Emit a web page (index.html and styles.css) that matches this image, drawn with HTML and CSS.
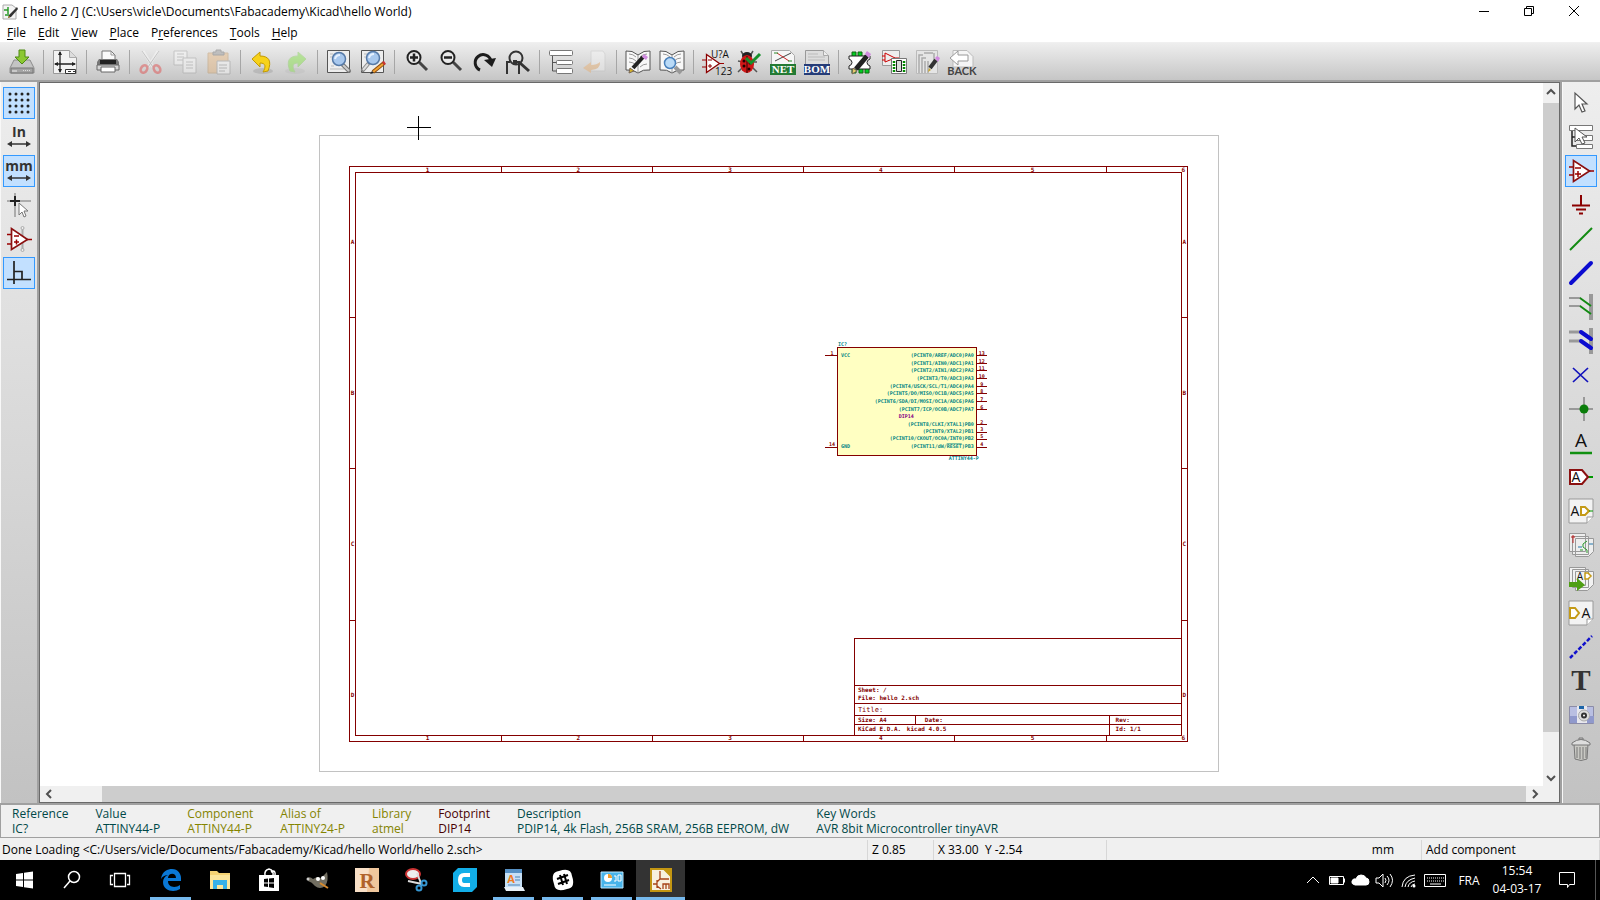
FILE: index.html
```html
<!DOCTYPE html>
<html lang="en">
<head>
    <meta charset="UTF-8">
    <meta name="viewport" content="width=device-width, initial-scale=1.0">
    <title>[ hello 2 /] (C:\Users\vicle\Documents\Fabacademy\Kicad\hello World)</title>
    <link rel="stylesheet" href="styles.css">
</head>
<body>
    <header class="titlebar">
        <svg class="app-icon" viewBox="0 0 16 16"><path d="M1 1h9l4 3v11H1z" fill="#f4f4f4" stroke="#aaa"/><path d="M2 6h4M6 3v7M3 11h4" stroke="#2a9a2a" stroke-width="1.5"/><path d="M15 3L7 11l-1 3 3-1 7-8z" fill="#333"/><path d="M6 14l1-2 1 1z" fill="#c90"/></svg>
        <span class="title">[ hello 2 /] (C:\Users\vicle\Documents\Fabacademy\Kicad\hello World)</span>
        <div class="window-buttons">
            <button aria-label="Minimize"><svg viewBox="0 0 12 12"><path d="M1 6.5h10" stroke="#000"/></svg></button>
            <button aria-label="Restore"><svg viewBox="0 0 12 12" fill="none" stroke="#000"><path d="M1.5 3.5h7v7h-7zM3.5 3.5v-2h7v7h-2"/></svg></button>
            <button aria-label="Close"><svg viewBox="0 0 12 12"><path d="M1 1l10 10M11 1L1 11" stroke="#000"/></svg></button>
        </div>
    </header>

    <nav class="menu">
        <button><u>F</u>ile</button>
        <button><u>E</u>dit</button>
        <button><u>V</u>iew</button>
        <button><u>P</u>lace</button>
        <button>P<u>r</u>eferences</button>
        <button><u>T</u>ools</button>
        <button><u>H</u>elp</button>
    </nav>

    <div class="toolbar">
        <button aria-label="Save"><svg viewBox="0 0 24 24"><path d="M4 10h16l4 8v5H0v-5z" fill="#c4c4c4" stroke="#8c8c8c"/><path d="M1 18h22v5H1z" fill="#a4a4a4" stroke="#777"/><path d="M13 20.5h8" stroke="#ddd" stroke-dasharray="1 1"/><path d="M2 21h5" stroke="#eee"/><path d="M9 0h6v7h4l-7 7-7-7h4z" fill="#8cc832" stroke="#4e8a12"/></svg></button>
        <hr>
        <button aria-label="Page settings"><svg viewBox="0 0 24 24"><path d="M.5.5h16l7 7v16H.5z" fill="#f3f3f3" stroke="#999"/><path d="M16.5.5v7h7" fill="#ddd" stroke="#aaa"/><path d="M7 2v20M2 14h20" stroke="#222" stroke-width="1.3"/><path d="M7 1L5 5h4zM7 23l-2-4h4zM1 14l4-2v4zM23 14l-4-2v4z" fill="#222"/><path d="M12.5 19.5h10v4h-10zM15 21.5h3M20 21.5h2" fill="#fff" stroke="#333"/></svg></button>
        <hr>
        <button aria-label="Print"><svg viewBox="0 0 24 24"><path d="M6 10V1h9l4 4v5" fill="#fafafa" stroke="#777"/><path d="M15 1v4h4" fill="none" stroke="#999"/><path d="M3 9h18l2 3v8H1v-8z" fill="#777"/><path d="M4 10h16v4H4z" fill="#222"/><path d="M1 15h22v5H1z" fill="#d6d6d6" stroke="#666"/><path d="M5 17h14v5H5z" fill="#fff" stroke="#666"/></svg></button>
        <hr>
        <button aria-label="Cut" disabled><svg viewBox="0 0 24 24" fill="none"><path d="M4 1l10 16M19 1L9 17" stroke="#fff" stroke-width="3"/><path d="M3 1l11 16M20 1L9 17" stroke="#999"/><g stroke="#e33030" stroke-width="2.500"><ellipse cx="5" cy="19" rx="3" ry="4" transform="rotate(35 5 19)"/><ellipse cx="18" cy="19" rx="3" ry="4" transform="rotate(-35 18 19)"/></g></svg></button>
        <button aria-label="Copy" disabled><svg viewBox="0 0 24 24"><path d="M1 1h13v14H1z" fill="#fff" stroke="#999"/><path d="M4 4h7M4 7h7M4 10h7" stroke="#999"/><path d="M10 8h13v15H10z" fill="#fff" stroke="#999"/><path d="M13 12h7M13 15h7M13 18h7" stroke="#999"/></svg></button>
        <button aria-label="Paste" disabled><svg viewBox="0 0 24 24"><path d="M1 3h20v20H1z" fill="#e8b070" stroke="#b98a50"/><path d="M6 5V2h3V0h5v2h3v3z" fill="#888" stroke="#555"/><path d="M10 11h13v13H10z" fill="#fff" stroke="#888"/><path d="M12 15h8M12 18h8M12 21h6" stroke="#888"/></svg></button>
        <hr>
        <button aria-label="Undo"><svg viewBox="0 0 24 24"><ellipse cx="13" cy="21" rx="10" ry="3" fill="#aaa" opacity=".6"/><path d="M2 9l8-7v4c9 0 12 5 8 15l-5 1c3-5 3-9-3-9v4z" fill="#f7d21b" stroke="#c39a06"/></svg></button>
        <button aria-label="Redo" disabled><svg viewBox="0 0 24 24"><ellipse cx="11" cy="21" rx="10" ry="3" fill="#aaa" opacity=".5"/><path d="M22 9l-8-7v4C5 6 2 11 6 21l5 1c-3-5-3-9 3-9v4z" fill="#75e32b" stroke="#7fce4f"/></svg></button>
        <hr>
        <button aria-label="Find"><svg viewBox="0 0 24 24"><path d="M.5.5h22v22H.5z" fill="#eee" stroke="#555"/><path d="M3 4h3M3 7h2M3 19h14M4 16h3" stroke="#bbb"/><path d="M16 15l6 6" stroke="#777" stroke-width="4" stroke-linecap="round"/><path d="M16 15l6 6" stroke="#ccc" stroke-width="2"/><circle cx="12" cy="9" r="6.5" fill="#a8c8ee" stroke="#567aa8" stroke-width="1.5"/><path d="M8 9q1-4 5-4" fill="none" stroke="#e6f1ff" stroke-width="2"/></svg></button>
        <button aria-label="Find and replace"><svg viewBox="0 0 24 24"><path d="M.5.5h22v22H.5z" fill="#eee" stroke="#555"/><path d="M3 4h3M3 7h2" stroke="#bbb"/><path d="M7 14l-5 6" stroke="#888" stroke-width="4" stroke-linecap="round"/><path d="M7 14l-5 6" stroke="#ddd" stroke-width="2"/><circle cx="12" cy="8" r="6.5" fill="#a8c8ee" stroke="#567aa8" stroke-width="1.5"/><path d="M8 8q1-4 5-4" fill="none" stroke="#e6f1ff" stroke-width="2"/><path d="M23 13L12 22" stroke="#8c4d10" stroke-width="4"/><path d="M22 14L12 22" stroke="#f1a233" stroke-width="2"/><path d="M21 12l2-1 2 3-2 1z" fill="#c33"/><path d="M9 24l2-3 2 2z" fill="#222"/></svg></button>
        <hr>
        <button aria-label="Zoom in"><svg viewBox="-2 0 24 24" fill="none" stroke="#222"><path d="M13 12l8 8" stroke="#444" stroke-width="3"/><circle cx="8" cy="7.5" r="6.500" fill="#e9e9e9" stroke-width="2"/><path d="M4 7.5h8M8 3.500v8" stroke-width="2.500"/></svg></button>
        <button aria-label="Zoom out"><svg viewBox="-2 0 24 24" fill="none" stroke="#222"><path d="M13 12l8 8" stroke="#444" stroke-width="3"/><circle cx="8" cy="7.5" r="6.500" fill="#e9e9e9" stroke-width="2"/><path d="M4 7.5h8" stroke-width="2.500"/></svg></button>
        <button aria-label="Redraw view"><svg viewBox="0 0 24 24"><path d="M8 20A8 8 0 1 1 19 11" fill="none" stroke="#1c1c1c" stroke-width="3"/><path d="M12 10l12-2-4 9z" fill="#1c1c1c"/></svg></button>
        <button aria-label="Zoom to fit"><svg viewBox="1 0 24 24" fill="none" stroke="#333" stroke-width="2"><path d="M5 12H2v12M11 12h3v12"/><path d="M15 13l9 8" stroke-width="3"/><circle cx="11" cy="8" r="6.5"/><path d="M8 10h4v4H8z" fill="#333" stroke="none"/></svg></button>
        <hr>
        <button aria-label="Navigate hierarchy"><svg viewBox="0 0 24 24"><path d="M3.5 5v16h4M3.5 12.5h4" fill="none" stroke="#555"/><g fill="#fff" stroke="#777"><rect x=".5" y=".5" width="23" height="5" rx="1"/><rect x="7.5" y="10.5" width="16" height="4" rx="1"/><rect x="7.5" y="18.5" width="16" height="5" rx="1"/></g></svg></button>
        <button class="faint" aria-label="Leave sheet" disabled><svg viewBox="0 0 24 24"><path d="M8 1h12l2 3v17H8z" fill="#fff" stroke="#bbb"/><path d="M17 12q1 7-9 8v3l-8-5 8-6v3q6 0 9-3z" fill="#f29a3b"/></svg></button>
        <hr>
        <button aria-label="Library editor"><svg viewBox="0 0 24 24"><path d="M0 1q6-1 12 4 6-5 12-4v19q-7-1-12 3-5-4-12-3z" fill="#f8f8f8" stroke="#555"/><path d="M12 5v18M3 4q4 0 7 3M3 8q4 0 7 3M3 12q4 0 7 3M21 4q-4 0-7 3M21 14q-4 0-7 3" fill="none" stroke="#999"/><path d="M17 7L7 18" stroke="#222" stroke-width="4"/><path d="M16 7l2-3 4 3-2 3z" fill="#d18be0"/><path d="M3 23l1-5 4 3z" fill="#d6b428" stroke="#765"/></svg></button>
        <button aria-label="Library browser"><svg viewBox="0 0 24 24"><path d="M0 1q6-1 12 4 6-5 12-4v19q-7-1-12 3-5-4-12-3z" fill="#f8f8f8" stroke="#555"/><path d="M12 5v18M3 4q4 0 7 3M21 4q-4 0-7 3M21 8q-4 0-7 3M21 12q-4 0-7 3" fill="none" stroke="#999"/><path d="M15 17l6 6" stroke="#999" stroke-width="4"/><circle cx="10" cy="13" r="5.5" fill="#b9daf7" stroke="#4980bb" stroke-width="1.5"/></svg></button>
        <hr>
        <button aria-label="Annotate"><svg viewBox="0 0 24 24"><path d="M-1 10h4M-1 17h4M16 13.5h5" stroke="#900"/><path d="M3.5 4.5v18l13-9z" fill="#fff" stroke="#8b0000" stroke-width="1.3"/><path d="M5 10h4M5 16h4M7 14v4" stroke="#8b0000"/><text x="8" y="8" class="icon-text">U?A</text><text x="12" y="25" class="icon-text">123</text></svg></button>
        <button aria-label="Electrical rules check"><svg viewBox="0 0 24 24"><path d="M4 1l3 5M16 1l-3 5M1 11l5 1M1 22l5-5M20 22l-5-5M15 12h5" stroke="#555" stroke-width="1.5"/><ellipse cx="10" cy="6" rx="5" ry="4" fill="#222"/><ellipse cx="10" cy="14" rx="7" ry="9" fill="#cf1616"/><path d="M10 6v17" stroke="#300"/><g fill="#200"><circle cx="7" cy="11" r="1.5"/><circle cx="13" cy="13" r="1.5"/><circle cx="7" cy="16" r="1.5"/><circle cx="12" cy="19" r="1.5"/></g><path d="M9 8l5 5 9-9" fill="none" stroke="#17912b" stroke-width="3"/></svg></button>
        <button aria-label="Generate netlist"><svg viewBox="0 0 24 24"><path d="M.5.5h18l5 5v9H.5z" fill="#f6f6f6" stroke="#aaa"/><path d="M4 11l16-8" stroke="#444"/><path d="M6 3l12 8" stroke="#c22"/><path d="M3 3h4M17 11h4" stroke="#2a8a2a"/><path d="M-1 14h26v11H-1z" fill="#237a33"/><text x="12" y="23" class="badge-text">NET</text></svg></button>
        <button aria-label="Bill of materials"><svg viewBox="0 0 24 24"><path d="M.5.5h18l5 5v9H.5z" fill="#ddd" stroke="#999"/><path d="M18.5.5v5h5" fill="#eee" stroke="#aaa"/><path d="M3 4h10M3 7h17M3 10h17" stroke="#bbb"/><path d="M-1 14h26v11H-1z" fill="#253c78"/><text x="12" y="23" class="badge-text">BOM</text></svg></button>
        <hr>
        <button aria-label="Footprint editor"><svg viewBox="0 0 24 24"><g fill="#0c2" stroke="#161"><path d="M4 2h4v5H4zM10 2h4v5h-4zM4 18h4v5H4zM11 18h4v5h-4zM17 18h4v5h-4z"/></g><path d="M1 6h21v3q-3 1-3 3.500t3 3.500v3H1v-3q3-1 3-3.500T1 9z" fill="#fff" stroke="#222"/><path d="M19 6L8 19" stroke="#222" stroke-width="5"/><path d="M17 4l2-3 4 3-2 4z" fill="#d18be0"/><path d="M4 24l1-6 4 3z" fill="#e5d06a" stroke="#765"/></svg></button>
        <button aria-label="Assign footprints"><svg viewBox="0 0 24 24"><path d="M.5.5h17v15H.5z" fill="#eee" stroke="#999"/><path d="M3 3v9l10-4zM0 6h3M0 10h3M13 8h4" fill="none" stroke="#c00"/><path d="M9.5 8.5h15v15h-15z" fill="#fff" stroke="#777"/><path d="M14.5 10.5h5v11h-5z" fill="#ddd" stroke="#222"/><path d="M12 11v11M22 11v11" stroke="#080" stroke-width="2.5" stroke-dasharray="2 1"/></svg></button>
        <button aria-label="Layout board"><svg viewBox="0 0 24 24"><path d="M.5.5h21v23H.5z" fill="#e5e5e5" stroke="#bbb"/><path d="M3 23V5h4M6 23V8h4M9 23V11M12 23V11M8 3h9M18 3v9" fill="none" stroke="#aaa" stroke-width="1.5"/><path d="M20 10l-6 8" stroke="#333" stroke-width="4"/><path d="M19 8l2-2 3 2-2 4z" fill="#d18be0"/><path d="M12 22l1-4 2 2z" fill="#c9a52a"/></svg></button>
        <button aria-label="Back annotate"><svg viewBox="0 0 24 24"><path d="M3 .5h14l6 6V17H3z" fill="#f5f5f5" stroke="#bbb"/><path d="M0 8l8-7v4h10v6H8v4z" fill="#fff" stroke="#999"/><text x="12" y="25" class="back-text">BACK</text></svg></button>
    </div>

    <main class="workspace">
        <div class="sidebar">
            <button class="active" aria-label="Grid"><svg viewBox="1 0 24 24"><path d="M4 3h19M4 9h19M4 15h19M4 21h19" stroke="#222" stroke-width="3" stroke-linecap="round" stroke-dasharray="0 6"/></svg></button>
            <button aria-label="Inches"><svg viewBox="0 0 24 24"><text x="12" y="12" class="unit-text">In</text><path d="M3 19h18M0 19l5-3v6zM24 19l-5-3v6z" fill="#333"/><path d="M3 19h18" stroke="#333" stroke-width="1.500"/></svg></button>
            <button class="active" aria-label="Millimetres"><svg viewBox="0 0 24 24"><text x="12" y="12" class="unit-text">mm</text><path d="M0 19l5-3v6zM24 19l-5-3v6z" fill="#333"/><path d="M3 19h18" stroke="#333" stroke-width="1.500"/></svg></button>
            <button aria-label="Cursor shape"><svg viewBox="0 0 24 24"><path d="M0 8h24M8 0v24" stroke="#999" stroke-width="1.5"/><path d="M3 8h10M8 3v10" stroke="#222" stroke-width="2"/><path d="M12 10v12l3-3 2 5 2-1-2-5h4z" fill="#fff" stroke="#777"/></svg></button>
            <button aria-label="Show hidden pins"><svg viewBox="0 0 24 24"><path d="M15.5 2v20" stroke="#aaa" stroke-width="2"/><circle cx="15.5" cy="1" r="1.5" fill="#eee" stroke="#aaa"/><circle cx="15.5" cy="23" r="1.5" fill="#eee" stroke="#aaa"/><path d="M0 7.5h4M0 17h4M20 12.5h5" stroke="#900" stroke-width="1.5"/><path d="M4.5 1.5v21l16-10z" fill="#fff" stroke="#8b1010" stroke-width="1.7"/><path d="M7 9h5M7 15h5M9.5 12.5v5" stroke="#900" stroke-width="1.5"/></svg></button>
            <button class="active" aria-label="Orthogonal wires"><svg viewBox="0 0 24 24"><path d="M7 0v23M0 18.5h24M7 10.5h8v8" fill="none" stroke="#222" stroke-width="1.7"/></svg></button>
        </div>

        <div class="canvas">
            <svg class="sheet" viewBox="39 82 1503 704">
                <rect x="318" y="135" width="900" height="636" class="page"/>
                <g class="frame">
                    <rect x="348" y="166" width="839" height="575"/>
                    <rect x="354" y="172" width="827" height="563"/>
                    <path d="M500 166v6M651 166v6M803 166v6M954 166v6M1106 166v6M500 735v6M651 735v6M803 735v6M954 735v6M1106 735v6"/>
                    <path d="M348 317h6M348 468h6M348 620h6M1181 317h6M1181 468h6M1181 620h6"/>
                    <path d="M1181 638H854v97M854 685h327M854 703h327M854 715h327M854 724h327M915 715v9M1109 715v20"/>
                </g>
                <g class="ruler">
                    <text x="426" y="171">1</text><text x="577" y="171">2</text><text x="729" y="171">3</text><text x="880" y="171">4</text><text x="1032" y="171">5</text><text x="1183" y="171">6</text>
                    <text x="426" y="740">1</text><text x="577" y="740">2</text><text x="729" y="740">3</text><text x="880" y="740">4</text><text x="1032" y="740">5</text><text x="1183" y="740">6</text>
                    <text x="351" y="243">A</text><text x="351" y="394">B</text><text x="351" y="546">C</text><text x="351" y="697">D</text>
                    <text x="1184" y="243">A</text><text x="1184" y="394">B</text><text x="1184" y="546">C</text><text x="1184" y="697">D</text>
                </g>
                <g class="title-block">
                    <text x="857" y="692">Sheet: /</text>
                    <text x="857" y="700">File: hello 2.sch</text>
                    <text x="857" y="712" class="sheet-title">Title:</text>
                    <text x="857" y="722">Size: A4</text>
                    <text x="924" y="722">Date:</text>
                    <text x="1115" y="722">Rev:</text>
                    <text x="857" y="731">KiCad E.D.A.</text>
                    <text x="906" y="731">kicad 4.0.5</text>
                    <text x="1115" y="731">Id: 1/1</text>
                </g>

                <!-- ATTINY44-P -->
                <rect x="837" y="347" width="139" height="108" class="chip"/>
                <path class="pins" d="M824 355h12M824 447h12M976 355h10M976 363h10M976 370h10M976 378h10M976 386h10M976 393h10M976 401h10M976 409h10M976 424h10M976 432h10M976 439h10M976 447h10"/>
                <g class="pin-names">
                    <text x="837" y="345">IC?</text>
                    <text x="840" y="356">VCC</text>
                    <text x="840" y="448">GND</text>
                </g>
                <g class="pin-names right">
                    <text x="973" y="356">(PCINT0/AREF/ADC0)PA0</text>
                    <text x="973" y="364">(PCINT1/AIN0/ADC1)PA1</text>
                    <text x="973" y="371">(PCINT2/AIN1/ADC2)PA2</text>
                    <text x="973" y="379">(PCINT3/T0/ADC3)PA3</text>
                    <text x="973" y="387">(PCINT4/USCK/SCL/T1/ADC4)PA4</text>
                    <text x="973" y="394">(PCINT5/DO/MISO/OC1B/ADC5)PA5</text>
                    <text x="973" y="402">(PCINT6/SDA/DI/MOSI/OC1A/ADC6)PA6</text>
                    <text x="973" y="410">(PCINT7/ICP/OC0B/ADC7)PA7</text>
                    <text x="973" y="425">(PCINT8/CLKI/XTAL1)PB0</text>
                    <text x="973" y="433">(PCINT9/XTAL2)PB1</text>
                    <text x="973" y="440">(PCINT10/CKOUT/OC0A/INT0)PB2</text>
                    <text x="973" y="448">(PCINT11/dW/<tspan class="inverted">RESET</tspan>)PB3</text>
                    <text x="978" y="460">ATTINY44-P</text>
                </g>
                <text x="898" y="417" class="footprint">DIP14</text>
                <g class="pin-numbers">
                    <text x="831" y="354">1</text><text x="831" y="446">14</text>
                    <text x="981" y="354">13</text><text x="981" y="362">12</text><text x="981" y="369">11</text><text x="981" y="377">10</text>
                    <text x="981" y="385">9</text><text x="981" y="392">8</text><text x="981" y="400">7</text><text x="981" y="408">6</text>
                    <text x="981" y="423">2</text><text x="981" y="431">3</text><text x="981" y="438">5</text><text x="981" y="446">4</text>
                </g>
                <path class="cursor" d="M405 127h24M417 115v24"/>
            </svg>
            <div class="vscroll">
                <button aria-label="Scroll up"><svg viewBox="0 0 10 10"><path d="M1 7l4-4 4 4"/></svg></button>
                <div class="track"><div class="thumb"></div></div>
                <button aria-label="Scroll down"><svg viewBox="0 0 10 10"><path d="M1 3l4 4 4-4"/></svg></button>
            </div>
            <div class="hscroll">
                <button aria-label="Scroll left"><svg viewBox="0 0 10 10"><path d="M7 1L3 5l4 4"/></svg></button>
                <div class="track"><div class="thumb"></div></div>
                <button aria-label="Scroll right"><svg viewBox="0 0 10 10"><path d="M3 1l4 4-4 4"/></svg></button>
            </div>
            <div class="corner"></div>
        </div>

        <div class="sidebar tools">
            <button aria-label="Select"><svg viewBox="0 0 24 24"><path d="M6 2v16l4-4 3 7 3-1-3-7h5z" fill="#fff" stroke="#555" stroke-width="1.2"/></svg></button>
            <button aria-label="Ascend or descend hierarchy"><svg viewBox="0 0 24 24"><path d="M3 5v16h4M3 12h4" fill="none" stroke="#222" stroke-width="1.5"/><g fill="#fff" stroke="#777"><path d="M.5.5h23v5H.5zM7.5 10.5h16v5h-16zM7.5 19.5h16v4h-16z"/></g><path d="M6 3v14l4-4 3 6 3-1-3-6h5z" fill="#fff" stroke="#555"/></svg></button>
            <button class="active" aria-label="Place component"><svg viewBox="0 0 24 24"><path d="M0 8h4M0 16h4M20 12h5" stroke="#900" stroke-width="1.5"/><path d="M4.5 1.5v21l16-10.5z" fill="#fff" stroke="#8b1010" stroke-width="1.7"/><path d="M6 9h6M6 15h6M9 12v6" stroke="#900" stroke-width="1.5"/></svg></button>
            <button aria-label="Place power port"><svg viewBox="0 0 24 24"><path d="M12 2v10M3 12.5h18M7 16.5h10M10 20.5h4" stroke="#8b0000" stroke-width="2"/></svg></button>
            <button aria-label="Place wire"><svg viewBox="0 0 24 24"><path d="M1 23L23 1" stroke="#118a11" stroke-width="2"/></svg></button>
            <button aria-label="Place bus"><svg viewBox="0 0 24 24"><path d="M2 22L22 2" stroke="#0b0bd0" stroke-width="4" stroke-linecap="round"/></svg></button>
            <button aria-label="Wire to bus entry"><svg viewBox="0 0 24 24"><path d="M0 3h12M0 11h12" stroke="#999" stroke-width="2"/><path d="M22-1v26" stroke="#999" stroke-width="4"/><path d="M11 3l11 8M11 11l11 8" stroke="#118a11" stroke-width="2"/></svg></button>
            <button aria-label="Bus to bus entry"><svg viewBox="0 0 24 24"><path d="M0 3h12M0 12h12" stroke="#999" stroke-width="3"/><path d="M22-1v26" stroke="#999" stroke-width="4"/><path d="M12 3l10 7M12 12l10 7" stroke="#0b0bd0" stroke-width="4" stroke-linecap="round"/></svg></button>
            <button aria-label="No connect"><svg viewBox="0 0 24 24"><path d="M4 5l15 14M19 5L4 19" stroke="#1111bb" stroke-width="1.7"/></svg></button>
            <button aria-label="Junction"><svg viewBox="0 0 24 24"><path d="M0 12h24M15 0v24" stroke="#999" stroke-width="2"/><circle cx="15" cy="12" r="4.5" fill="#0a7d0a"/></svg></button>
            <button aria-label="Net name"><svg viewBox="0 0 24 24"><text x="12" y="16" class="label-large">A</text><path d="M1 22h22" stroke="#109010" stroke-width="2.5"/></svg></button>
            <button aria-label="Global label"><svg viewBox="0 0 24 24"><path d="M19 12h5" stroke="#090" stroke-width="2"/><path d="M1 5h12l6 7-6 7H1z" fill="#fff" stroke="#8b1010" stroke-width="2"/><text x="7" y="17" class="label-medium">A</text></svg></button>
            <button aria-label="Hierarchical label"><svg viewBox="0 0 24 24"><path d="M0 0h24v18l-6 6H0z" fill="#f3f3f3" stroke="#999"/><path d="M24 18h-6v6" fill="#fff" stroke="#999"/><text x="6" y="17" class="label-medium">A</text><path d="M12 8h4l4 4-4 4h-4z" fill="#fff" stroke="#c49a17" stroke-width="2"/><path d="M20 12h4" stroke="#090"/></svg></button>
            <button aria-label="Hierarchical sheet"><svg viewBox="0 0 24 24"><g fill="#eee" stroke="#999"><path d="M.5.5h16v18H.5zM3.5 3.5h16v18h-16zM6.5 5.5h18v13l-5 5h-13z"/></g><path d="M2 4h4M4 2v8" stroke="#b22"/><path d="M9 14h4M20 11h4" stroke="#27a"/><path d="M18 8l-4 3v3l4 3v3M14 17h-3" fill="none" stroke="#2a9a2a"/></svg></button>
            <button aria-label="Import hierarchical label"><svg viewBox="0 0 24 24"><path d="M.5.5h16v18H.5zM3.5 2.5h16v18h-16zM6.5 4.5h18v13l-6 6h-12z" fill="#f2f2f2" stroke="#999"/><text x="11" y="13" class="label-small">A</text><path d="M16 6h3l3 3-3 3h-3z" fill="#fff" stroke="#c49a17" stroke-width="1.5"/><path d="M0 15h8v-4l8 7-8 6v-4H0z" fill="#4f9f13"/></svg></button>
            <button aria-label="Place sheet pin"><svg viewBox="0 0 24 24"><path d="M0 0h24v18l-6 6H0z" fill="#f3f3f3" stroke="#999"/><path d="M24 18h-6v6" fill="#fff" stroke="#999"/><path d="M1 7h5l4 5-4 5H1z" fill="#fff" stroke="#c49a17" stroke-width="2"/><text x="17" y="17" class="label-medium">A</text></svg></button>
            <button aria-label="Graphic line"><svg viewBox="0 0 24 24"><path d="M1 23L23 1" stroke="#1111cc" stroke-width="2.5" stroke-dasharray="4 2"/></svg></button>
            <button aria-label="Place text"><svg viewBox="0 0 24 24"><text x="12" y="21" class="text-tool">T</text></svg></button>
            <button aria-label="Place image"><svg viewBox="0 0 24 24"><path d="M.5 3.5h24v17H.5z" fill="#b9bfe2" stroke="#8c8ca8"/><path d="M1 13h24v7H1z" fill="#9099cc"/><path d="M8 3h10v17H8z" fill="#e8e8ee"/><path d="M10 3h5v3h-5z" fill="#1d65a8"/><circle cx="15" cy="12.5" r="5.5" fill="#ddd" stroke="#aaa"/><circle cx="15" cy="12.5" r="3" fill="#333"/><circle cx="15" cy="12.5" r="1" fill="#fff"/></svg></button>
            <button aria-label="Delete"><svg viewBox="0 0 24 24"><path d="M5 7h14l-1 15q-6 3-12 0z" fill="#c9c9c4" stroke="#777"/><path d="M8 10v11M11 10v12M14 10v12M17 10v11" stroke="#777"/><path d="M3 6q9-7 18 0v2H3z" fill="#ddd" stroke="#777"/><path d="M10 3V1h4v2" fill="none" stroke="#777"/></svg></button>
        </div>
    </main>

    <section class="info">
        <div class="teal">Reference<br>IC?</div>
        <div class="teal">Value<br>ATTINY44-P</div>
        <div class="olive">Component<br>ATTINY44-P</div>
        <div class="olive">Alias of<br>ATTINY24-P</div>
        <div class="olive">Library<br>atmel</div>
        <div class="maroon">Footprint<br>DIP14</div>
        <div class="teal">Description<br>PDIP14, 4k Flash, 256B SRAM, 256B EEPROM, dW</div>
        <div class="teal">Key Words<br>AVR 8bit Microcontroller tinyAVR</div>
    </section>

    <footer class="status">
        <span>Done Loading &lt;C:/Users/vicle/Documents/Fabacademy/Kicad/hello World/hello 2.sch&gt;</span>
        <span>Z 0.85</span>
        <span>X 33.00&nbsp; Y -2.54</span>
        <span class="units">mm</span>
        <span>Add component</span>
    </footer>

    <div class="taskbar">
        <button aria-label="Start"><svg viewBox="0 0 24 24"><path d="M4 6l7-1v6.500H4zM12 4.800l9-1.300v8h-9zM4 12.500h7V19l-7-1zM12 12.500h9v8l-9-1.300z" fill="#fff"/></svg></button>
        <button aria-label="Search"><svg viewBox="0 0 24 24" fill="none" stroke="#fff" stroke-width="1.5"><circle cx="14" cy="9" r="5.5"/><path d="M10 13l-6 7"/></svg></button>
        <button aria-label="Task view"><svg viewBox="0 0 24 24" fill="none" stroke="#fff" stroke-width="1.3"><path d="M6.5 5.5h11v13h-11zM5 7.5H2.5v9H5M19 7.5h2.5v9H19"/></svg></button>
        <button class="pinned open" aria-label="Edge"><svg viewBox="0 0 24 24"><path d="M2 11C3 3 9 1 13 1c6 0 9 5 9 9v3H9c0 7 8 7 12 4v4c-6 4-17 2-17-7 0-3 2-6 5-7-3 0-5 1-7 4zM9 10h8c0-6-8-5-8 0z" fill="#0a78d6"/></svg></button>
        <button class="pinned" aria-label="File Explorer"><svg viewBox="0 0 24 24"><path d="M2 3h7l2 2h11v16H2z" fill="#f6d372"/><path d="M2 7h20v14H2z" fill="#fde69a"/><path d="M5 12h14v9h-4v-4H9v4H5z" fill="#37b1e8"/></svg></button>
        <button class="pinned" aria-label="Store"><svg viewBox="0 0 24 24"><path d="M8 8q-1-6 4-7 5 1 4 7M14 4q5-3 4 4" fill="none" stroke="#fff" stroke-width="1.5"/><path d="M2 7h20v16H2z" fill="#fff"/><path d="M7 11l4-.5v4H7zM12 10.500l5-.5v4.500h-5zM7 15.500h4V19l-4-.5zM12 15.500h5V20l-5-.8z" fill="#000"/></svg></button>
        <button class="pinned" aria-label="GIMP"><svg viewBox="0 0 24 24"><path d="M1 10q3-2 6 1l4-2 4 1 6-6q2 9-2 14-5 4-10 0-3-4-7-5z" fill="#716d60"/><circle cx="12" cy="11" r="2" fill="#fff"/><circle cx="17" cy="10" r="2" fill="#fff"/><circle cx="2" cy="11" r="1.5" fill="#ccc"/><path d="M14 15l8 5" stroke="#d78a2d" stroke-width="2"/></svg></button>
        <button class="pinned" aria-label="Revit"><svg viewBox="0 0 24 24"><path d="M0 0h24v24H0z" fill="#f8dfc6"/><path d="M14 0h10v24H12z" fill="#efc79d"/><text x="12" y="20" class="revit-text">R</text></svg></button>
        <button class="pinned" aria-label="Snipping Tool"><svg viewBox="0 0 24 24"><ellipse cx="9" cy="6" rx="7" ry="5" fill="#eee" stroke="#c33" stroke-width="2"/><path d="M4 13l14 3M13 5l5 13" stroke="#ddd" stroke-width="2"/><g fill="none" stroke="#3596d2" stroke-width="2"><circle cx="20" cy="15" r="2.5"/><circle cx="15" cy="20" r="2.5"/></g></svg></button>
        <button class="pinned" aria-label="Cura"><svg viewBox="0 0 24 24"><path d="M5 0h19v19l-5 5H0V5z" fill="#12aee8"/><path d="M17 7H11q-4 0-4 5t4 5h6" fill="none" stroke="#fff" stroke-width="4"/></svg></button>
        <button class="pinned open" aria-label="Notes"><svg viewBox="0 0 24 24"><path d="M3 2h17v18H3z" fill="#c7e0f6"/><path d="M3 1h17v4H3z" fill="#5690c4"/><path d="M13 9h5M13 12h5M6 17h12" stroke="#4b83b5"/><path d="M2 19h19l2 4H4z" fill="#e9f1f8"/><text x="9" y="15" class="note-text">A</text></svg></button>
        <button class="pinned open" aria-label="Slack"><svg viewBox="0 0 24 24"><path d="M8 3q12-4 13 5 4 12-5 13Q4 25 3 16-1 4 8 3z" fill="#fff"/><path d="M9 7l3 10M13 6l3 10M6 11l11-4M7 16l11-4" stroke="#000" stroke-width="2"/></svg></button>
        <button class="pinned open" aria-label="Control Panel"><svg viewBox="0 0 24 24"><path d="M1 4h22v16H1z" fill="#48b4ea" stroke="#bce7ff"/><circle cx="8" cy="10" r="4" fill="#fff"/><path d="M8 10V6a4 4 0 0 1 4 4z" fill="#f39b23"/><path d="M14 8h2v5h-2M18 7h3v6h-3zM4 17h12" fill="none" stroke="#fff"/></svg></button>
        <button class="pinned open current" aria-label="KiCad schematic"><svg viewBox="0 0 24 24"><path d="M2 1h13l7 7v15H2z" fill="#f8f1df" stroke="#c39612" stroke-width="2"/><path d="M14 0h9v10z" fill="#c39612"/><path d="M4 16h4M8 12v8M8 14l3-3V5M11 3v4M11 11h9M8 18l4 3M14 21v-5h6v5M17 16v5" fill="none" stroke="#a64318" stroke-width="1.3"/></svg></button>
        <div class="tray">
            <button aria-label="Show hidden icons"><svg viewBox="0 0 24 24"><path d="M6 15l6-6 6 6"/></svg></button>
            <button aria-label="Battery"><svg viewBox="0 0 24 24"><path d="M4.5 8.5h14v8h-14zM19.5 10.5v4"/><path d="M6 10h7v5H6z" fill="#fff" stroke="none"/></svg></button>
            <button aria-label="OneDrive"><svg viewBox="0 0 24 24"><path d="M6 17q-4-1-3-4 1-3 4-2 1-4 5-4t5 3q3 0 3 4 0 3-3 3z" fill="#fff" stroke="none"/><path d="M7 15q1-4 6-3" stroke="#000"/></svg></button>
            <button aria-label="Volume"><svg viewBox="1 0 24 24"><path d="M4 10h3l4-4v13l-4-4H4zM13 10q2 2 0 5M15 8q4 4 0 9M18 6q5 6 0 13"/></svg></button>
            <button aria-label="Network"><svg viewBox="0 0 24 24"><path d="M5 19Q6 8 18 7M8 19q1-7 10-9M11 19q1-5 7-6M14 19q1-3 4-3"/><circle cx="17" cy="18" r="1.5" fill="#fff"/></svg></button>
            <button class="keyboard" aria-label="Touch keyboard"><svg viewBox="0 0 24 24"><path d="M1.5 6.5h21v12h-21z"/><path d="M4 10h17M4 13h17" stroke-dasharray="1 1"/><path d="M7 16h11"/></svg></button>
            <button class="language">FRA</button>
            <button class="clock">15:54<br>04-03-17</button>
            <button class="notifications" aria-label="Notifications"><svg viewBox="0 0 24 24"><path d="M4.5 4.5h15v12h-5l-2 3v-3h-8z"/></svg></button>
        </div>
    </div>
</body>
</html>
```
FILE: styles.css
```css
* {
    box-sizing: border-box;
}
body {
    margin: 0;
    height: 100vh;
    display: flex;
    flex-direction: column;
    overflow: hidden;
    background-color: white;
    color: black;
    font-family: "Open Sans", "Noto Sans", sans-serif;
    font-size: 12px;
}
button {
    display: flex;
    align-items: center;
    justify-content: center;
    margin: 0;
    padding: 0;
    border: none;
    background: none;
    color: inherit;
    font: inherit;
}
svg {
    display: block;
    overflow: visible;
}

/* title and menu */
.titlebar {
    display: flex;
    align-items: center;
    height: 23px;
    padding-left: 2px;
    gap: 5px;
}
.app-icon {
    width: 16px;
    height: 16px;
}
.window-buttons {
    display: flex;
    align-self: flex-start;
    margin-left: auto;
    margin-right: 4px;
}
.window-buttons button {
    width: 45px;
    height: 21px;
}
.window-buttons svg {
    width: 12px;
    height: 12px;
}
.menu {
    display: flex;
    height: 19px;
    padding-left: 7px;
    gap: 12px;
}
.menu u {
    text-underline-offset: 2px;
}

/* top toolbar */
.toolbar {
    display: flex;
    align-items: center;
    height: 40px;
    padding-left: 5px;
    border-top: 1px solid #f0f0f0;
    border-bottom: 2px solid #a0a0a0;
    background: linear-gradient(#eeeeee, #c6c6c6);
}
.toolbar button {
    width: 34px;
    height: 34px;
}
.toolbar svg {
    width: 24px;
    height: 24px;
}
.toolbar button:disabled svg {
    opacity: 0.4;
}
.toolbar .faint:disabled svg {
    opacity: 0.3;
}
.toolbar hr {
    width: 1px;
    height: 24px;
    margin: 0 4px;
    border: none;
    background-color: #a6a6a6;
}
.icon-text {
    font: 10px "Open Sans", sans-serif;
    fill: #111;
}
.badge-text {
    font: bold 11px "Liberation Serif", serif;
    fill: white;
    text-anchor: middle;
}
.back-text {
    font: bold 11px Lato, sans-serif;
    fill: #444;
    text-anchor: middle;
}

/* side toolbars */
.workspace {
    flex: 1;
    display: flex;
    min-height: 0;
    gap: 2px;
    border-bottom: 2px solid #a0a0a0;
    background-color: #a0a0a0;
}
.sidebar {
    display: flex;
    flex-direction: column;
    gap: 2px;
    width: 37px;
    padding: 5px 2px;
    border-left: 1px solid #f8f8f8;
    background: linear-gradient(#eeeeee, #c2c2c2);
}
.sidebar.tools {
    width: 38px;
}
.sidebar button {
    width: 32px;
    height: 32px;
    border: 1px solid transparent;
}
.sidebar .active {
    border-color: #3399ff;
    background-color: #c2e0ff;
}
.sidebar svg {
    width: 24px;
    height: 24px;
}
.unit-text {
    font: bold 14px "Open Sans", sans-serif;
    fill: #333;
    text-anchor: middle;
}
.label-large, .label-medium, .label-small {
    font: 19px "Open Sans", sans-serif;
    fill: #111;
    text-anchor: middle;
}
.label-medium {
    font-size: 14px;
}
.label-small {
    font-size: 10px;
}
.text-tool {
    font: bold 29px "Liberation Serif", serif;
    fill: #333;
    text-anchor: middle;
}

/* drawing area */
.canvas {
    flex: 1;
    min-width: 0;
    display: grid;
    grid-template-columns: 1fr 16px;
    grid-template-rows: minmax(0, 1fr) 16px;
    border: 1px solid #696969;
    background-color: white;
}
.sheet {
    width: 100%;
    height: 100%;
    overflow: hidden;
    font-family: "DejaVu Sans Mono", monospace;
    font-size: 5px;
}
.sheet rect, .sheet path {
    fill: none;
    stroke: #840000;
    shape-rendering: crispEdges;
}
.sheet .page {
    stroke: #c2c2c2;
}
.sheet .chip {
    fill: #ffffc2;
}
.sheet .cursor {
    stroke: black;
}
.ruler, .title-block, .pin-numbers {
    fill: #840000;
}
.ruler, .pin-numbers {
    text-anchor: middle;
}
.ruler {
    font-size: 6px;
    font-weight: bold;
}
.title-block {
    font-size: 6px;
    font-weight: bold;
}
.sheet-title {
    font-size: 7px;
    font-weight: normal;
}
.pin-names {
    fill: #008484;
    font-weight: bold;
}
.right {
    text-anchor: end;
}
.inverted {
    text-decoration: overline;
}
.pin-numbers {
    font-weight: bold;
}
.footprint {
    fill: #840084;
    font-weight: bold;
}
.vscroll, .hscroll {
    display: flex;
    background-color: #f0f0f0;
}
.vscroll {
    flex-direction: column;
}
.vscroll button {
    width: 16px;
    height: 17px;
}
.hscroll button {
    width: 17px;
    height: 16px;
}
.vscroll svg, .hscroll svg {
    width: 10px;
    height: 10px;
}
.vscroll svg path, .hscroll svg path {
    fill: none;
    stroke: #505050;
    stroke-width: 2;
}
.track {
    flex: 1;
    display: flex;
}
.thumb {
    flex: 1;
    background-color: #cdcdcd;
}
.vscroll .track {
    padding-top: 3px;
    padding-bottom: 37px;
}
.hscroll .track {
    padding-left: 45px;
}
.corner {
    background-color: #f0f0f0;
}

/* component info and status */
.info {
    display: flex;
    gap: 27px;
    height: 33px;
    padding: 1px 11px 0;
    border: 1px solid #a0a0a0;
    border-top: none;
    background-color: #f0f0f0;
    line-height: 15px;
    white-space: nowrap;
}
.teal {
    color: #004848;
}
.olive {
    color: #848400;
}
.maroon {
    color: #480000;
}
.status {
    display: grid;
    grid-template-columns: 1fr 66px 173px 315px 178px;
    height: 22px;
    padding-top: 2px;
    background-color: #f0f0f0;
    line-height: 20px;
    white-space: nowrap;
}
.status span {
    padding-left: 4px;
    border-right: 1px solid #d7d7d7;
}
.status span:first-child {
    padding-left: 2px;
}
.status .units {
    padding-right: 27px;
    text-align: right;
}

/* taskbar */
.taskbar {
    display: flex;
    height: 40px;
    background-color: black;
    color: white;
}
.taskbar button {
    width: 48px;
    height: 40px;
}
.taskbar svg {
    width: 24px;
    height: 24px;
}
.taskbar .pinned {
    width: 41px;
    margin: 0 4px;
    border-top: 3px solid transparent;
    border-bottom: 3px solid transparent;
}
/* first pinned app sits a little apart from the system buttons */
.taskbar button:not(.pinned) + .pinned {
    margin-left: 6px;
}
.taskbar .pinned.open {
    border-bottom-color: #76b9ed;
}
.taskbar .pinned.current {
    width: 49px;
    margin: 0;
    border-top-color: #333;
    background-color: #333;
}
.revit-text {
    font: bold 21px "Liberation Serif", serif;
    fill: #b0622a;
    text-anchor: middle;
}
.note-text {
    font: bold 11px "Open Sans", sans-serif;
    fill: #f07c1c;
    text-anchor: middle;
}
.tray {
    display: flex;
    margin-left: auto;
    margin-right: 4px;
    padding-right: 6px;
    border-right: 1px solid #555;
}
.taskbar .tray button {
    width: 24px;
}
.tray svg path {
    stroke: white;
}
.tray svg {
    fill: none;
}
.taskbar .tray .keyboard {
    width: 28px;
}
.taskbar .tray .language {
    width: 40px;
}
.taskbar .tray .clock {
    width: 56px;
    line-height: 18px;
}
.taskbar .tray .notifications {
    width: 44px;
}
```
